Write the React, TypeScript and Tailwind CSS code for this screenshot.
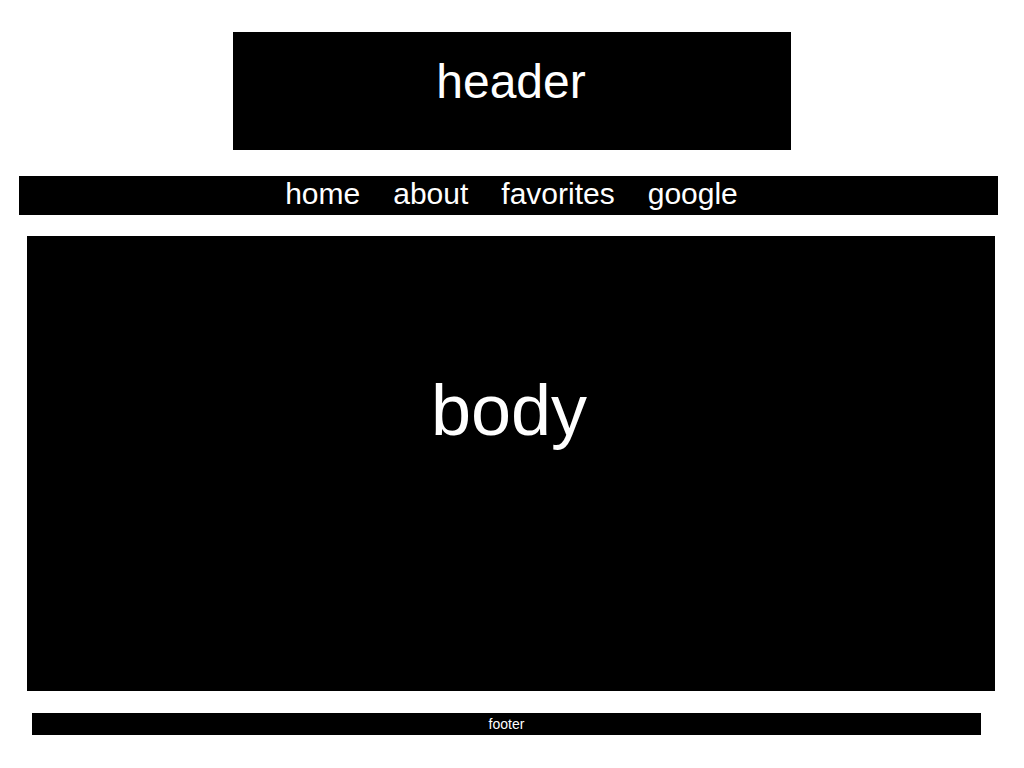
const font = { fontFamily: '"Liberation Sans", Arial, sans-serif' };

const navItems = ["home", "about", "favorites", "google"];

export default function App() {
    return (
        <div className="min-h-[768px] w-[1024px] bg-white pt-[32px]" style={font}>
            {/* Header */}
            <div className="mx-auto h-[118px] w-[558px] bg-black pt-[22px] pr-[2px] text-center text-[48px] leading-[55px] text-white">
                header
            </div>

            {/* Nav */}
            <nav className="ml-[19px] mt-[26px] flex h-[39px] w-[979px] justify-center gap-[33px] bg-black pl-[6px] text-[30px] leading-[35px] text-white">
                {navItems.map((item) => (
                    <a key={item} href="#" className="text-white">
                        {item}
                    </a>
                ))}
            </nav>

            {/* Body */}
            <div className="ml-[27px] mt-[21px] h-[455px] w-[968px] bg-black pt-[134px] pr-[4px] text-center text-[72px] leading-[80px] text-white">
                body
            </div>

            {/* Footer */}
            <div className="ml-[32px] mt-[22px] h-[22px] w-[949px] bg-black pt-[2px] text-center text-[14px] leading-[19px] text-white">
                footer
            </div>
        </div>
    );
}
